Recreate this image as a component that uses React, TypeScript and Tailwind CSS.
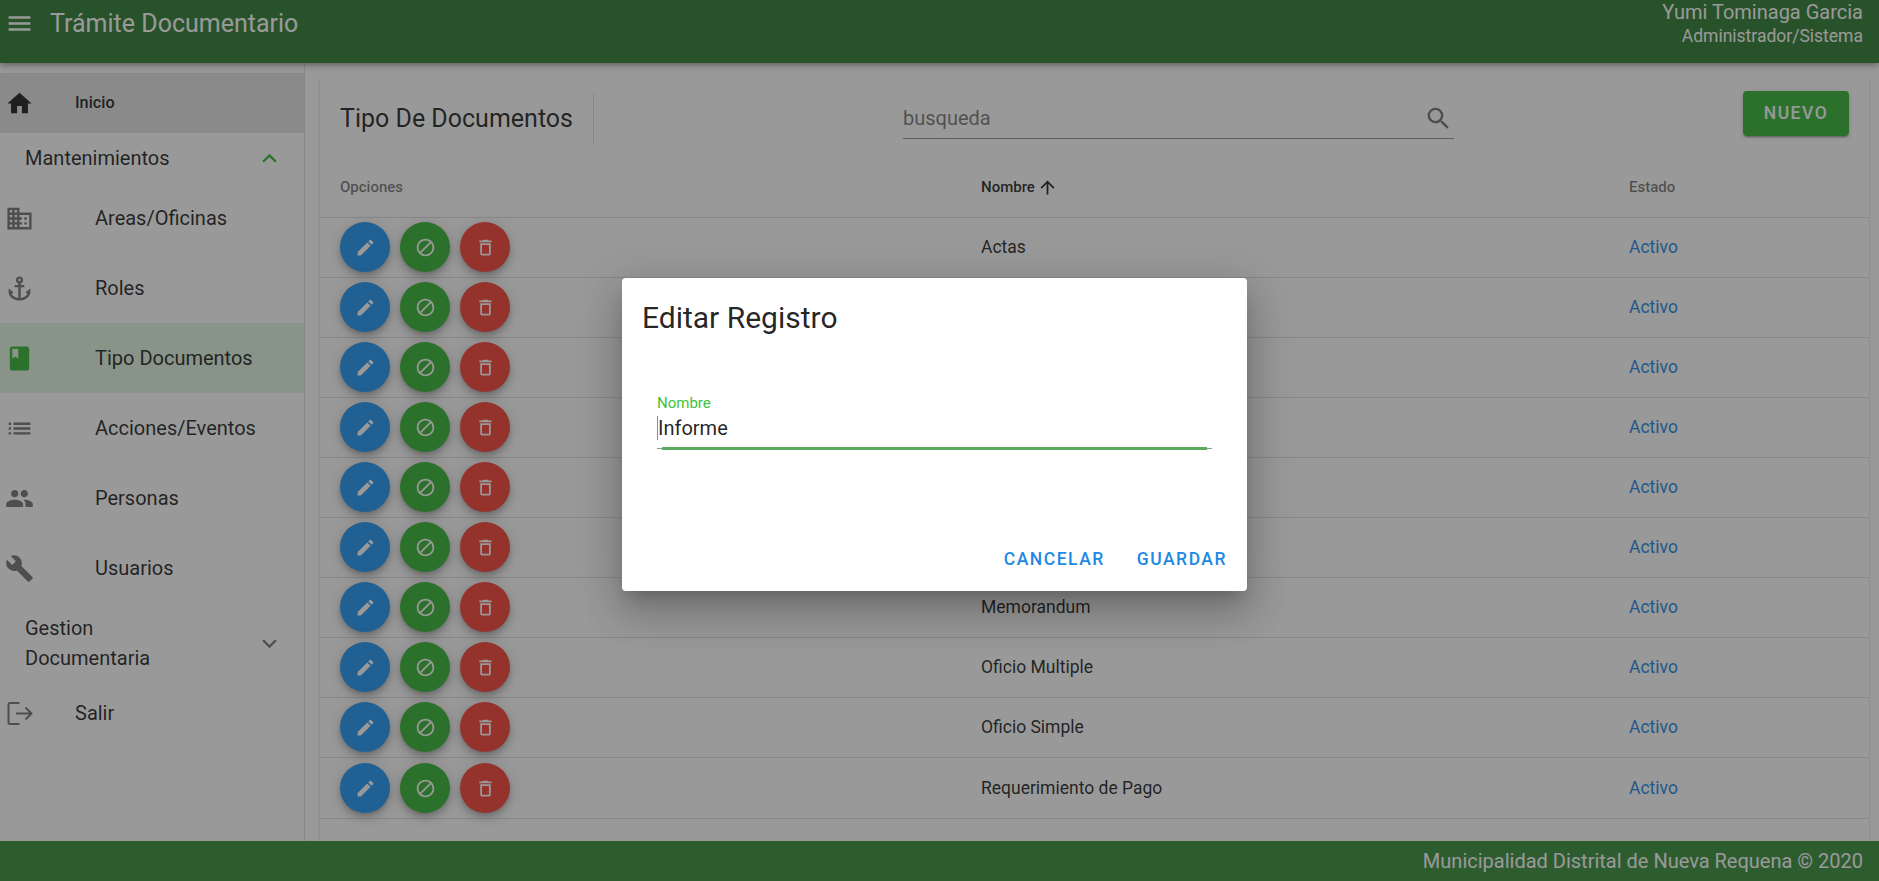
import React from "react";
import {
  MdMenu, MdHome, MdKeyboardArrowUp, MdKeyboardArrowDown, MdDomain, MdAnchor, MdBook, MdList,
  MdPeople, MdBuild, MdSearch, MdEdit, MdBlock, MdDeleteOutline, MdArrowUpward,
} from "react-icons/md";

const rows = ["Actas", "Carta", "Circular", "Constancia", "Informe", "Informe Tecnico", "Memorandum", "Oficio Multiple", "Oficio Simple", "Requerimiento de Pago"];

const subs: { label: string; icon: React.ElementType; active?: boolean }[] = [
  { label: "Areas/Oficinas", icon: MdDomain },
  { label: "Roles", icon: MdAnchor },
  { label: "Tipo Documentos", icon: MdBook, active: true },
  { label: "Acciones/Eventos", icon: MdList },
  { label: "Personas", icon: MdPeople },
  { label: "Usuarios", icon: MdBuild },
];

function RoundBtn({ color, icon: Icon }: { color: string; icon: React.ElementType }) {
  return (
    <button className={`flex h-[50px] w-[50px] items-center justify-center rounded-full text-white shadow-[0_3px_5px_-1px_rgba(0,0,0,0.2),0_6px_10px_0_rgba(0,0,0,0.14),0_1px_18px_0_rgba(0,0,0,0.12)] ${color}`}>
      <Icon size={21} />
    </button>
  );
}

function ExitIcon() {
  return (
    <svg width="29" height="29" viewBox="0 0 29 29" fill="none" stroke="currentColor" strokeWidth="2" className="shrink-0 text-[#0000008a]">
      <path d="M14.5 4H5a1.5 1.5 0 0 0-1.5 1.5v18A1.5 1.5 0 0 0 5 25h9.5" />
      <path d="M11 14.5h15.5M20.5 8.5l6 6-6 6" />
    </svg>
  );
}

export default function App() {
  return (
    <div className="relative flex h-[881px] w-[1879px] flex-col overflow-hidden bg-white [font-family:Roboto,sans-serif] text-[#000000de]">
      <header className="relative z-10 flex h-[63px] shrink-0 items-start justify-between bg-[#2e7d32] text-white shadow-[0_2px_4px_-1px_rgba(0,0,0,0.2),0_4px_5px_0_rgba(0,0,0,0.14),0_1px_10px_0_rgba(0,0,0,0.12)]">
        <div className="flex items-center pl-[5px] pt-[9px]">
          <MdMenu size={29} />
          <span className="ml-[16px] text-[25px] leading-[28px]">Trámite Documentario</span>
        </div>
        <div className="pr-[16px] text-right">
          <div className="text-[20px] leading-[24px]">Yumi Tominaga Garcia</div>
          <div className="text-[17.5px] leading-[24px]">Administrador/Sistema</div>
        </div>
      </header>

      <div className="flex min-h-0 flex-1">
        <aside className="w-[305px] shrink-0 border-r border-[#e0e0e0] pt-[10px]">
          <div className="flex h-[60px] items-center bg-[#e3e3e3] pl-[5px]">
            <MdHome size={29} className="shrink-0 text-[#000000de]" />
            <span className="ml-[41px] text-[16.25px] font-medium">Inicio</span>
          </div>
          <div className="flex h-[50px] items-center justify-between pl-[25px] pr-[20px] text-[20px]">
            <span>Mantenimientos</span>
            <MdKeyboardArrowUp size={29} className="text-[#34b534]" />
          </div>
          {subs.map((s) => (
            <div key={s.label} className={`flex h-[70px] items-center pl-[5px] text-[20px] ${s.active ? "bg-[#e2f6e2]" : ""}`}>
              <s.icon size={29} className={`shrink-0 ${s.active ? "text-[#34b534]" : "text-[#0000008a]"}`} />
              <span className="ml-[61px]">{s.label}</span>
            </div>
          ))}
          <div className="flex h-[80px] items-center justify-between pl-[25px] pr-[20px] text-[20px] leading-[30px]">
            <span className="w-[170px]">Gestion Documentaria</span>
            <MdKeyboardArrowDown size={29} className="text-[#0000008a]" />
          </div>
          <div className="flex h-[60px] items-center pl-[5px] text-[20px]">
            <ExitIcon />
            <span className="ml-[41px]">Salir</span>
          </div>
        </aside>

        <main className="min-w-0 flex-1 pl-[15px] pr-[10px] pt-[16px]">
          <section className="h-[800px] bg-white shadow-[0_2px_1px_-1px_rgba(0,0,0,0.2),0_1px_1px_0_rgba(0,0,0,0.14),0_1px_3px_0_rgba(0,0,0,0.12)]">
            <div className="flex h-[79px] items-center pl-[20px] pr-[20px]">
              <h1 className="text-[25px] font-normal leading-[30px]">Tipo De Documentos</h1>
              <div className="ml-[20px] h-[50px] w-px bg-[#e0e0e0]" />
              <div className="ml-[309px] flex h-[41px] w-[551px] items-center justify-between border-b border-[#0000006b]">
                <span className="text-[20px] text-[#0000008a]">busqueda</span>
                <MdSearch size={29} className="mr-[1px] text-[#0000008a]" />
              </div>
              <button className="mb-[10px] ml-auto flex h-[45px] w-[106px] items-center justify-center rounded-[4px] bg-[#34b534] text-[17.5px] font-medium tracking-[1.5px] text-white shadow-[0_3px_1px_-2px_rgba(0,0,0,0.2),0_2px_2px_0_rgba(0,0,0,0.14),0_1px_5px_0_rgba(0,0,0,0.12)]">
                NUEVO
              </button>
            </div>
            <div className="grid h-[60px] grid-cols-[641px_648px_1fr] items-center border-b border-[#e0e0e0] text-[15px] font-medium text-[#0000008a]">
              <div className="pl-[20px]">Opciones</div>
              <div className="flex items-center pl-[20px] text-[#000000de]">
                Nombre
                <MdArrowUpward size={21} className="ml-[2px]" />
              </div>
              <div className="pl-[20px]">Estado</div>
            </div>
            {rows.map((r, i) => (
              <div key={r} className={`grid grid-cols-[641px_648px_1fr] items-center border-b border-[#e0e0e0] text-[17.5px] ${i === 9 ? "h-[61px]" : "h-[60px] pb-[1px]"}`}>
                <div className="flex gap-[10px] pl-[20px]">
                  <RoundBtn color="bg-[#2196f3]" icon={MdEdit} />
                  <RoundBtn color="bg-[#34b534]" icon={MdBlock} />
                  <RoundBtn color="bg-[#f44336]" icon={MdDeleteOutline} />
                </div>
                <div className="pl-[20px]">{r}</div>
                <div className="pl-[20px] text-[#1e88e5]">Activo</div>
              </div>
            ))}
          </section>
        </main>
      </div>

      <footer className="relative z-10 flex h-[40px] shrink-0 items-center justify-end bg-[#388e3c] pr-[16px] text-[20px] text-white">
        Municipalidad Distrital de Nueva Requena © 2020
      </footer>

      <div className="absolute inset-0 z-20 bg-[#212121]/[0.46]" />

      <div className="absolute left-[622px] top-[278px] z-30 flex h-[313px] w-[625px] flex-col rounded-[4px] bg-white shadow-[0_11px_15px_-7px_rgba(0,0,0,0.2),0_24px_38px_3px_rgba(0,0,0,0.14),0_9px_46px_8px_rgba(0,0,0,0.12)]">
        <h2 className="pl-[20px] pt-[21px] text-[30px] font-normal leading-[38px] text-[#000000de]">Editar Registro</h2>
        <div className="mx-[35px] mt-[57px]">
          <div className="text-[15px] leading-[18px] text-[#3cc23c]">Nombre</div>
          <div className="mt-[4px] flex h-[24px] items-center border-l border-[#3cc23c] text-[20px] leading-[24px] text-[#000000de]">Informe</div>
          <div className="relative mt-[8px] h-px bg-[#0000006b]">
            <div className="absolute inset-x-[5px] -top-px h-[3px] bg-[#5bab5f]" />
          </div>
        </div>
        <div className="mt-auto flex items-center justify-end gap-[32px] pb-[19px] pr-[20px] text-[17.5px] font-medium tracking-[1.5px] text-[#1e88e5]">
          <button>CANCELAR</button>
          <button>GUARDAR</button>
        </div>
      </div>
    </div>
  );
}
